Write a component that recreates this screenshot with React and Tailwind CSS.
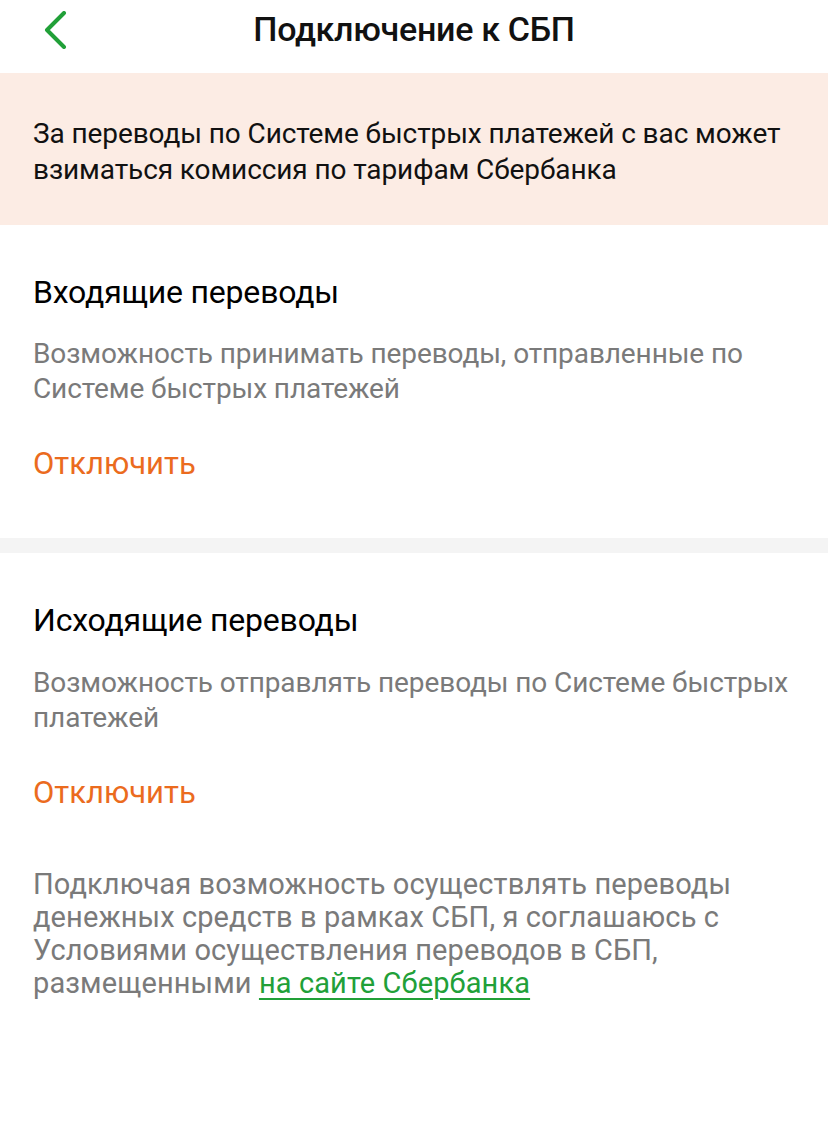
import React from "react";

export default function App() {
  return (
    <div className="w-[828px] h-[1148px] bg-white" style={{ fontFamily: "Roboto, 'Noto Sans', sans-serif" }}>
      <div className="relative h-[73px] flex items-center justify-center">
        <svg className="absolute left-[40px] top-[11px]" width="30" height="38" viewBox="0 0 30 38" fill="none">
          <path d="M24 2 L7 19 L24 36" stroke="#21A038" strokeWidth="4" strokeLinecap="round" strokeLinejoin="round" />
        </svg>
        <h1 className="text-[34px] font-medium text-[#111111] tracking-[-0.3px] -mt-[14px]">Подключение к СБП</h1>
      </div>
      <div className="bg-[#FCECE4] h-[152px] px-[33px] pt-[43px]">
        <p className="text-[28px] leading-[36px] text-[#111111] tracking-[-0.1px]">
          За переводы по Системе быстрых платежей с вас может взиматься комиссия по тарифам Сбербанка
        </p>
      </div>
      <div className="px-[33px] pt-[49px] pb-[56px]">
        <h2 className="text-[32px] leading-[36px] text-black tracking-[-0.2px]">Входящие переводы</h2>
        <p className="mt-[26px] text-[28px] leading-[35px] text-[#7A7A7A] tracking-[-0.1px]">
          Возможность принимать переводы, отправленные по Системе быстрых платежей
        </p>
        <p className="mt-[40px] text-[31px] leading-[36px] text-[#EB6B1E]">Отключить</p>
      </div>
      <div className="h-[15px] bg-[#F4F4F4]"></div>
      <div className="px-[33px] pt-[49px]">
        <h2 className="text-[32px] leading-[36px] text-black tracking-[-0.2px]">Исходящие переводы</h2>
        <p className="mt-[27px] text-[28px] leading-[35px] text-[#7A7A7A] tracking-[-0.1px]">
          Возможность отправлять переводы по Системе быстрых платежей
        </p>
        <p className="mt-[40px] text-[31px] leading-[36px] text-[#EB6B1E]">Отключить</p>
        <p className="mt-[57px] text-[29px] leading-[33px] text-[#7A7A7A] tracking-[0.1px]">
          Подключая возможность осуществлять переводы денежных средств в рамках СБП, я соглашаюсь с Условиями осуществления переводов в СБП, размещенными{" "}
          <span className="text-[#21A038] underline underline-offset-[5px] decoration-[1.5px]">на сайте Сбербанка</span>
        </p>
      </div>
    </div>
  );
}
